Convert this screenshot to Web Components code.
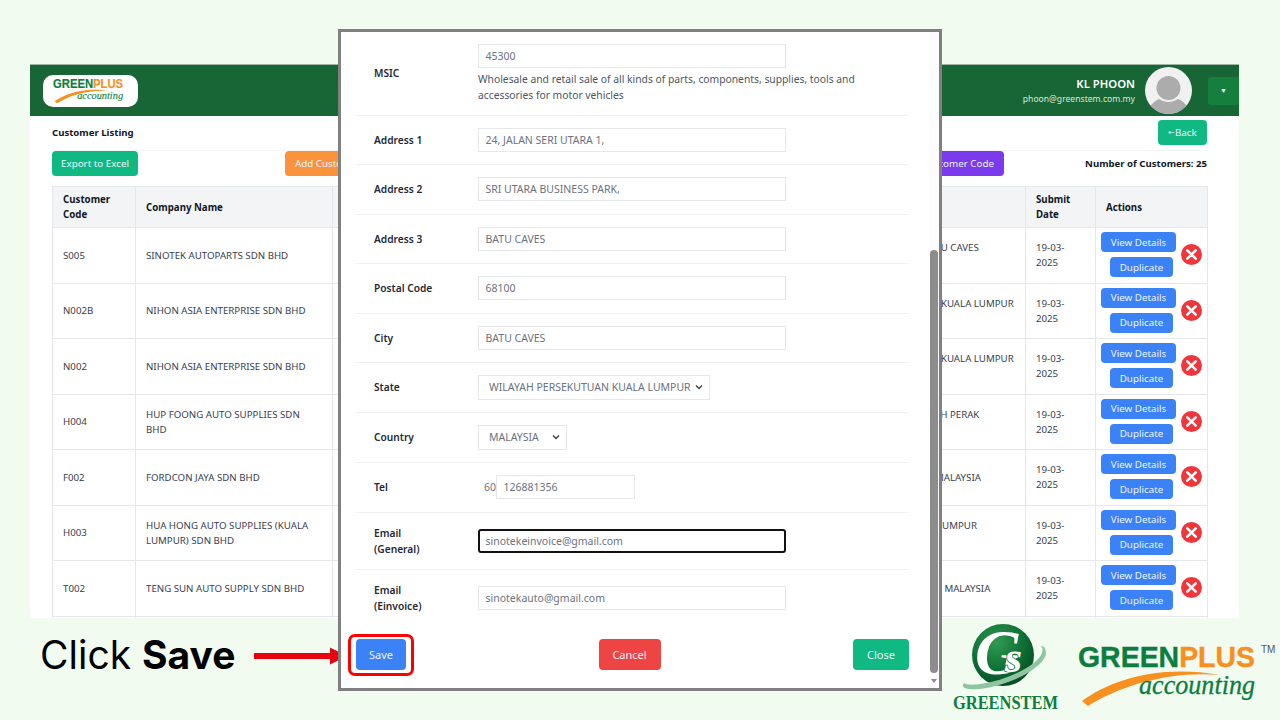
<!DOCTYPE html>
<html>
<head>
<meta charset="utf-8">
<title>Customer Listing</title>
<style>
  html, body { margin: 0; height: 720px; overflow: hidden; }
  body { background: #f2fbf0; font-family: "Noto Sans", sans-serif; position: relative; }
  .page { padding-top: 64px; display: flex; flex-direction: column; }
</style>
</head>
<body>
<div class="page">
  <app-panel></app-panel>
  <tutorial-strip></tutorial-strip>
</div>
<customer-modal></customer-modal>

<script>
class GreenplusLogo extends HTMLElement {
  connectedCallback() {
    const w = this.getAttribute("width") || 197;
    const tm = this.hasAttribute("tm");
    this.attachShadow({ mode: "open" }).innerHTML = `
      <style>:host { display: block; line-height: 0; } svg { overflow: visible; }</style>
      <svg width="${w}" viewBox="0 0 197 65">
        <text x="0" y="25" font-family="'Liberation Sans', sans-serif" font-weight="700" font-size="30" textLength="177" lengthAdjust="spacingAndGlyphs" fill="#0b7d3e" stroke="#0b7d3e" stroke-width=".4">GREEN<tspan fill="#f7901e" stroke="#f7901e">PLUS</tspan></text>
        ${tm ? `<text x="183" y="11" font-family="'Liberation Sans', sans-serif" font-size="10" fill="#555">TM</text>` : ""}
        <path d="M4 59C32 38 82 22 142 33C92 29 44 43 10 64Z" fill="#f7901e"/>
        <text x="61" y="52" font-family="'Liberation Serif', serif" font-style="italic" font-size="27" textLength="116" lengthAdjust="spacingAndGlyphs" fill="#0b7d3e" stroke="#0b7d3e" stroke-width=".3">accounting</text>
      </svg>`;
  }
}
customElements.define("greenplus-logo", GreenplusLogo);

class GreenstemLogo extends HTMLElement {
  connectedCallback() {
    this.attachShadow({ mode: "open" }).innerHTML = `
      <style>:host { display: block; line-height: 0; }</style>
      <svg width="106" height="90" viewBox="0 0 106 90">
        <defs>
          <radialGradient id="ball" cx="0.4" cy="0.3" r="0.8">
            <stop offset="0" stop-color="#2f9a50"/><stop offset="0.6" stop-color="#0b6b33"/><stop offset="1" stop-color="#063f20"/>
          </radialGradient>
        </defs>
        <circle cx="50" cy="33" r="31" fill="url(#ball)"/>
        <path d="M11 61C5 68 22 70 46 63C74 55 98 38 92 27C92 25 90 24 88 24C96 34 72 50 46 58C28 63 14 64 11 61Z" fill="#8fc4a0"/>
        <text x="22" y="52" font-family="'Liberation Serif', serif" font-style="italic" font-weight="700" font-size="64" fill="#fff">G</text>
        <text x="52" y="50" font-family="'Liberation Serif', serif" font-style="italic" font-weight="700" font-size="44" fill="#fff" stroke="#0b6b33" stroke-width="1.5" paint-order="stroke">s</text>
        <text x="0" y="87" font-family="'Liberation Serif', serif" font-weight="700" font-size="18" textLength="105" lengthAdjust="spacingAndGlyphs" fill="#0b7d3e">GREENSTEM</text>
      </svg>`;
  }
}
customElements.define("greenstem-logo", GreenstemLogo);

class AppHeader extends HTMLElement {
  connectedCallback() {
    this.attachShadow({ mode: "open" }).innerHTML = `
      <style>
        :host { display: flex; align-items: center; height: 52px; background: #186535; padding-left: 13px; border-top: 1px solid #9fb5a6; box-sizing: border-box; }
        .logo { width: 95px; height: 32px; background: #fff; border-radius: 10px; display: flex; align-items: center; justify-content: center; box-sizing: border-box; padding-left: 2px; }
        .user { margin-left: auto; text-align: right; color: #fff; padding-top: 1px; }
        .name { font-size: 11.3px; font-weight: 600; line-height: 16px; }
        .mail { font-size: 8.6px; line-height: 14px; color: #d5eadb; }
        svg { margin: 0 16px 0 10px; display: block; }
        .menu { width: 31px; height: 28px; background: #15803d; border-radius: 3px 0 0 3px; color: #fff; font-size: 7px; display: flex; align-items: center; justify-content: center; }
      </style>
      <div class="logo"><greenplus-logo width="78"></greenplus-logo></div>
      <div class="user"><div class="name">KL PHOON</div><div class="mail">phoon@greenstem.com.my</div></div>
      <svg width="47" height="47" viewBox="0 0 47 47">
        <defs><clipPath id="c"><circle cx="23.5" cy="23.5" r="23.5"/></clipPath></defs>
        <circle cx="23.5" cy="23.5" r="23.5" fill="#f1f1f1"/>
        <g clip-path="url(#c)" fill="#acacac">
          <circle cx="23.5" cy="21" r="12"/>
          <path d="M2 47C4 38 11 33 14 32C20 36 27 36 33 32C37 33 43 38 45 47Z"/>
        </g>
      </svg>
      <div class="menu">&#9660;</div>`;
  }
}
customElements.define("app-header", AppHeader);

class UiButton extends HTMLElement {
  connectedCallback() {
    const color = this.getAttribute("color") || "#3b82f6";
    const height = this.getAttribute("height") || 25;
    const pad = this.getAttribute("pad") || 10;
    const size = this.getAttribute("size") || 9.8;
    this.attachShadow({ mode: "open" }).innerHTML = `
      <style>
        :host { display: inline-flex; align-items: center; justify-content: center; box-sizing: border-box; height: ${height}px; padding: 0 ${pad}px; background: ${color}; color: #eaf5ff; font-size: ${size}px; border-radius: 4px; white-space: nowrap; }
      </style>
      <slot></slot>`;
  }
}
customElements.define("ui-button", UiButton);

class CustomerTable extends HTMLElement {
  connectedCallback() {
    const rows = [
      ["S005", "SINOTEK AUTOPARTS SDN BHD", "BATU CAVES", 2],
      ["N002B", "NIHON ASIA ENTERPRISE SDN BHD", "WP KUALA LUMPUR", 2],
      ["N002", "NIHON ASIA ENTERPRISE SDN BHD", "WP KUALA LUMPUR", 2],
      ["H004", "HUP FOONG AUTO SUPPLIES SDN BHD", "IPOH PERAK", 2],
      ["F002", "FORDCON JAYA SDN BHD", "JB MALAYSIA", 1],
      ["H003", "HUA HONG AUTO SUPPLIES (KUALA LUMPUR) SDN BHD", "KL LUMPUR", 2],
      ["T002", "TENG SUN AUTO SUPPLY SDN BHD", "SEL, MALAYSIA", 1],
      ["", "", "", 1]
    ];
    const body = rows.map(r => `
      <tr>
        <td>${r[0]}</td><td>${r[1]}</td><td></td><td class="addr">${r[2]}${r[3] === 2 ? "<br>&nbsp;" : ""}</td>
        <td>19-03-2025</td>
        <td class="act">
          <div class="actions">
            <div class="stack">
              <ui-button height="20" pad="0" style="width:75px">View Details</ui-button>
              <ui-button height="20" pad="0" style="width:63px;margin-left:6px">Duplicate</ui-button>
            </div>
            <svg width="21" height="21" viewBox="0 0 21 21"><circle cx="10.5" cy="10.5" r="10.5" fill="#f0353b"/><path d="M6.3 6.3L14.7 14.7M14.7 6.3L6.3 14.7" stroke="#fff" stroke-width="2.6" stroke-linecap="round"/></svg>
          </div>
        </td>
      </tr>`).join("");
    this.attachShadow({ mode: "open" }).innerHTML = `
      <style>
        :host { display: block; }
        table { border-collapse: collapse; table-layout: fixed; width: 1155px; font-size: 9.7px; color: #374151; }
        th, td { border: 1px solid #e5e7eb; padding: 0 10px; line-height: 15px; text-align: left; vertical-align: middle; }
        th { height: 40px; background: #f3f4f6; color: #111827; font-weight: 700; }
        td { height: 54.5px; }
        tr > :nth-child(3), tr > :nth-child(4) { border-left: 0; border-right: 0; }
        tr > :nth-child(3) { border-left: 1px solid #e5e7eb; }
        .addr { padding-left: 0; white-space: nowrap; }
        .act { padding: 0 0 0 5px; }
        .actions { display: flex; align-items: center; gap: 5px; margin-top: -1px; }
        .stack { display: flex; flex-direction: column; align-items: center; gap: 5px; }
      </style>
      <table>
        <colgroup><col style="width:83px"><col style="width:197px"><col style="width:591px"><col style="width:102px"><col style="width:70px"><col style="width:112px"></colgroup>
        <thead><tr><th>Customer Code</th><th>Company Name</th><th></th><th></th><th>Submit Date</th><th>Actions</th></tr></thead>
        <tbody>${body}</tbody>
      </table>`;
  }
}
customElements.define("customer-table", CustomerTable);

class AppPanel extends HTMLElement {
  connectedCallback() {
    this.attachShadow({ mode: "open" }).innerHTML = `
      <style>
        :host { display: block; margin-left: 30px; width: 1209px; height: 554px; background: #fff; overflow: hidden; }
        main { padding: 4px 32px 0 22px; }
        .title { display: flex; justify-content: space-between; align-items: center; height: 25px; }
        .title b { font-size: 9.6px; color: #111827; font-weight: 700; margin-top: -1px; }
        .bar { margin-top: 5px; border-top: 1px solid #f3f4f6; height: 35px; display: flex; align-items: flex-start; }
        .count { margin-left: auto; font-size: 9.6px; font-weight: 700; color: #111827; line-height: 25px; }
        .arr { font-family: "DejaVu Sans", sans-serif; font-size: 8px; }
      </style>
      <app-header></app-header>
      <main>
        <div class="title"><b>Customer Listing</b><ui-button color="#10b981" pad="0" style="width:49px"><span class="arr">&#8592;</span>Back</ui-button></div>
        <div class="bar">
          <ui-button color="#10b981" pad="0" style="width:86px">Export to Excel</ui-button>
          <ui-button color="#fb923c" pad="0" style="width:100px;margin-left:147px;justify-content:flex-start;padding-left:10px">Add Customer</ui-button>
          <ui-button color="#7c3aed" style="width:215px;margin-left:404px;justify-content:flex-end">Update Customer Code</ui-button>
          <div class="count">Number of Customers: 25</div>
        </div>
        <customer-table></customer-table>
      </main>`;
  }
}
customElements.define("app-panel", AppPanel);

class FormRow extends HTMLElement {
  connectedCallback() {
    this.attachShadow({ mode: "open" }).innerHTML = `
      <style>
        :host { display: grid; grid-template-columns: 104px 1fr; align-items: center; box-sizing: border-box; padding: 12px 0 12.5px 18px; border-bottom: 1px solid #eef0f2; }
        :host([last]) { border-bottom: 0; }
        .label { font-size: 10.2px; font-weight: 600; color: #1f2937; line-height: 16px; width: 70px; }
        .value { min-width: 0; }
      </style>
      <div class="label"><slot name="label"></slot></div>
      <div class="value"><slot></slot></div>`;
  }
}
customElements.define("form-row", FormRow);

class FormField extends HTMLElement {
  connectedCallback() {
    const chevron = this.hasAttribute("select")
      ? `<svg width="8" height="6" viewBox="0 0 8 6"><path d="M1 1.5L4 4.5L7 1.5" fill="none" stroke="#444" stroke-width="1.5"/></svg>` : "";
    const w = this.getAttribute("w") || 308;
    this.attachShadow({ mode: "open" }).innerHTML = `
      <style>
        :host { display: flex; align-items: center; justify-content: space-between; box-sizing: border-box; width: ${w}px; height: 24px; border: 1px solid #e5e7eb; padding: 0 6.5px; font-size: 10.5px; color: #6b7280; white-space: nowrap; }
        :host([select]) { padding: 0 6px 0 10px; height: 24.5px; }
        :host([focus]) { border: 2px solid #111; border-radius: 3px; padding: 0 5.5px; }
      </style>
      <slot></slot>${chevron}`;
  }
}
customElements.define("form-field", FormField);

class CustomerModal extends HTMLElement {
  connectedCallback() {
    this.attachShadow({ mode: "open" }).innerHTML = `
      <style>
        :host { position: absolute; left: 338px; top: 29px; width: 604px; height: 662px; box-sizing: border-box; border: 3px solid #808080; background: #fff; overflow: hidden; }
        .form { padding: 0 31px 0 15px; }
        .desc { font-size: 10.3px; line-height: 16px; color: #4b5563; margin: 3px 0 -1px; width: 400px; }
        .tel { display: flex; align-items: center; font-size: 10.5px; color: #6b7280; padding-left: 6px; }
        .foot { display: flex; justify-content: space-between; margin-top: 12.5px; }
        .foot :last-child { margin-right: -1px; }
        .track { position: absolute; right: 0; top: 0; bottom: 0; width: 10px; background: #fcfcfc; }
        .thumb { position: absolute; top: 218px; bottom: 15px; left: 1px; right: 1px; background: #8c8c8c; border-radius: 4px; }
        .down { position: absolute; bottom: 5px; left: 1.5px; width: 0; height: 0; border: 3.5px solid transparent; border-top: 4px solid #8c8c8c; border-bottom: 0; }
        .hl { position: absolute; left: 7px; top: 602px; width: 66px; height: 42px; box-sizing: border-box; border: 3px solid #f00; border-radius: 7px; }
      </style>
      <div class="form">
        <form-row><span slot="label">MSIC</span>
          <form-field>45300</form-field>
          <div class="desc">Wholesale and retail sale of all kinds of parts, components, supplies, tools and accessories for motor vehicles</div>
        </form-row>
        <form-row><span slot="label">Address 1</span><form-field>24, JALAN SERI UTARA 1,</form-field></form-row>
        <form-row><span slot="label">Address 2</span><form-field>SRI UTARA BUSINESS PARK,</form-field></form-row>
        <form-row><span slot="label">Address 3</span><form-field>BATU CAVES</form-field></form-row>
        <form-row><span slot="label">Postal Code</span><form-field>68100</form-field></form-row>
        <form-row><span slot="label">City</span><form-field>BATU CAVES</form-field></form-row>
        <form-row><span slot="label">State</span><form-field select w="232">WILAYAH PERSEKUTUAN KUALA LUMPUR</form-field></form-row>
        <form-row><span slot="label">Country</span><form-field select w="89">MALAYSIA</form-field></form-row>
        <form-row><span slot="label">Tel</span><div class="tel">60<form-field w="139">126881356</form-field></div></form-row>
        <form-row><span slot="label">Email (General)</span><form-field focus>sinotekeinvoice@gmail.com</form-field></form-row>
        <form-row last><span slot="label">Email (Einvoice)</span><form-field>sinotekauto@gmail.com</form-field></form-row>
        <div class="foot">
          <ui-button height="31" style="width:50px" pad="0" size="11">Save</ui-button>
          <ui-button height="31" style="width:62px" pad="0" size="11" color="#ef4444">Cancel</ui-button>
          <ui-button height="31" style="width:56px" pad="0" size="11" color="#10b981">Close</ui-button>
        </div>
      </div>
      <div class="track"><div class="thumb"></div><div class="down"></div></div>
      <div class="hl"></div>`;
  }
}
customElements.define("customer-modal", CustomerModal);

class TutorialStrip extends HTMLElement {
  connectedCallback() {
    this.attachShadow({ mode: "open" }).innerHTML = `
      <style>
        :host { display: flex; align-items: flex-start; height: 102px; }
        .say { font-family: Inter, sans-serif; font-size: 39px; color: #000; margin: 15px 0 0 40px; line-height: 44px; width: 214px; white-space: nowrap; }
        .arrow { margin-top: 29px; display: block; }
        .stem { margin-left: 606px; margin-top: 4px; }
        .plus { margin-left: 19px; margin-top: 24px; }
      </style>
      <div class="say">Click <b>Save</b></div>
      <svg class="arrow" width="93" height="18" viewBox="0 0 93 18"><path d="M0 6H76V0.5L93 9L76 17.5V12H0Z" fill="#e8000f"/></svg>
      <greenstem-logo class="stem"></greenstem-logo>
      <greenplus-logo class="plus" tm></greenplus-logo>`;
  }
}
customElements.define("tutorial-strip", TutorialStrip);
</script>
</body>
</html>
